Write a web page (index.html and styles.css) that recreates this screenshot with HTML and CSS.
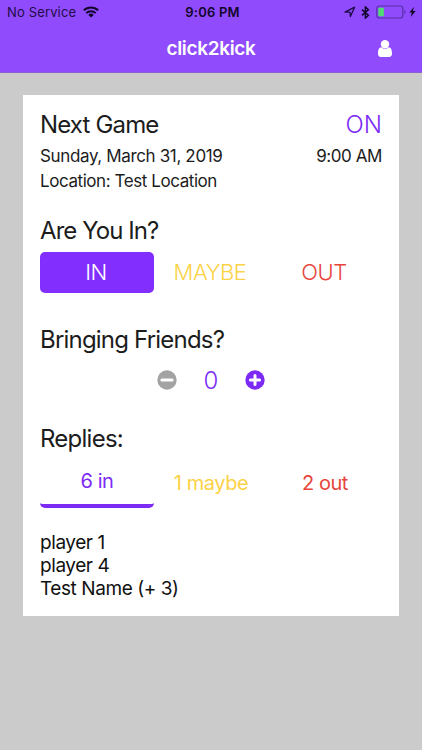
FILE: index.html
```
<!DOCTYPE html>
<html lang="en">
<head>
<meta charset="utf-8">
<title>click2kick</title>
<link rel="stylesheet" href="styles.css">
</head>
<body>
<header class="header">
  <div class="status">
    <div class="status-left">
      <span class="carrier">No Service</span>
      <svg class="wifi" width="16" height="12" viewBox="0 0 16 12"><g fill="none" stroke="#12062b" stroke-width="2"><path d="M.8 4.4a10.2 10.2 0 0 1 14.4 0"/><path d="M3.3 7.1a6.6 6.6 0 0 1 9.4 0"/></g><path d="M8 11.6 5.3 8.9a3.8 3.8 0 0 1 5.4 0z" fill="#12062b"/></svg>
    </div>
    <span class="clock">9:06 PM</span>
    <div class="status-right">
      <svg width="12" height="12" viewBox="0 0 12 12"><path d="M1 6.2 10.6 1.2 6.4 10.6 6 6.2z" fill="none" stroke="#1f0c48" stroke-width="1.3" stroke-linejoin="round"/></svg>
      <svg class="bluetooth" width="9" height="13" viewBox="0 0 9 13"><path d="M1 3.6 7.4 9.2 4.4 12V1l3 2.8L1 9.4" fill="none" stroke="#12062b" stroke-width="1.5"/></svg>
      <svg class="battery" width="30" height="14" viewBox="0 0 30 14"><rect x=".8" y="1" width="26" height="12" rx="2.5" fill="none" stroke="#5a2fa8" stroke-width="1.2"/><rect x="2.3" y="2.7" width="5.6" height="8.6" rx=".8" fill="#50db70"/><path d="M28.3 5v4q1.3-.5 1.3-2t-1.3-2" fill="#5a2fa8"/></svg>
      <svg class="bolt" width="7" height="10" viewBox="0 0 7 10"><path d="M4.8 0 .4 5.6h2.4L1.8 10l4.8-6H4z" fill="#12062b"/></svg>
    </div>
  </div>
  <div class="navbar">
    <h1>click2kick</h1>
    <svg class="user" width="14" height="17" viewBox="0 0 14 17"><path d="M3.3 7.2C1 7.2 0 10 0 13.6 0 15.6 1 17 2.8 17h8.4c1.8 0 2.8-1.4 2.8-3.4 0-3.6-1-6.4-3.3-6.4A5.2 5.2 0 0 1 7 9a5.2 5.2 0 0 1-3.7-1.8z" fill="#fff"/><circle cx="7" cy="4.2" r="4.2" fill="#fff"/></svg>
  </div>
</header>
<main class="card">
  <div class="row title"><h2>Next Game</h2><span class="on">ON</span></div>
  <div class="row detail first"><span class="date">Sunday, March 31, 2019</span><span class="time">9:00 AM</span></div>
  <div class="row detail"><span>Location: Test Location</span></div>
  <h2 class="attend">Are You In?</h2>
  <div class="choices">
    <div class="choice selected">IN</div>
    <div class="choice maybe">MAYBE</div>
    <div class="choice out">OUT</div>
  </div>
  <h2 class="friends">Bringing Friends?</h2>
  <div class="counter">
    <svg width="20" height="20" viewBox="0 0 20 20"><circle cx="10" cy="10" r="9.7" fill="#a3a3a3"/><path d="M5 10h10" stroke="#fff" stroke-width="3.2" stroke-linecap="round"/></svg>
    <span class="count">0</span>
    <svg width="20" height="20" viewBox="0 0 20 20"><circle cx="10" cy="10" r="9.7" fill="#7c2bf5"/><path d="M5.4 10h9.2M10 5.4v9.2" stroke="#fff" stroke-width="3" stroke-linecap="round"/></svg>
  </div>
  <h2 class="replies">Replies:</h2>
  <div class="tabs">
    <div class="tab active">6 in</div>
    <div class="tab maybe">1 maybe</div>
    <div class="tab out">2 out</div>
  </div>
  <ul class="players">
    <li>player 1</li>
    <li>player 4</li>
    <li>Test Name (+ 3)</li>
  </ul>
</main>
</body>
</html>
```
FILE: styles.css
```
* { box-sizing: border-box; margin: 0; padding: 0; }
body { height: 750px; overflow: hidden; background: #cbcbcb; font-family: Inter, "Liberation Sans", sans-serif; color: #1c1c1c; }
svg { display: block; flex: none; }
.header { height: 73px; background: #904bfd; border-bottom: 1px solid #8a5fcf; }
.status { display: grid; grid-template-columns: 1fr auto 1fr; align-items: center; height: 24px; padding: 0 6px 0 7px; font-size: 13px; color: #1f0c48; }
.status-left, .status-right { display: flex; align-items: center; }
.status-right { justify-content: flex-end; }
.carrier { letter-spacing: .15px; }
.wifi { margin-left: 7px; }
.clock { padding-left: 2px; font-weight: 600; letter-spacing: .2px; color: #12062b; }
.bluetooth { margin-left: 5px; }
.battery { margin-left: 6px; }
.bolt { margin-left: 3px; }
.navbar { display: grid; grid-template-columns: 1fr auto 1fr; align-items: center; height: 48px; padding: 0 30px; }
.navbar h1 { grid-column: 2; font-size: 19px; font-weight: 600; letter-spacing: -.35px; color: #fff; }
.user { justify-self: end; }
.card { width: 376px; height: 521px; margin: 22px 0 0 23px; padding: 14px 17px 0; background: #fff; }
.row { display: flex; justify-content: space-between; }
h2, .title { font-size: 24px; font-weight: 400; line-height: 32px; letter-spacing: -.85px; }
.on { color: #7c2bf5; font-weight: 300; letter-spacing: 0; }
.detail { font-size: 17px; line-height: 25px; letter-spacing: -.43px; }
.date { letter-spacing: -.36px; }
.first { margin-top: 3px; }
.attend { margin-top: 21px; letter-spacing: -.93px; }
.choices { display: grid; grid-template-columns: repeat(3, 1fr); margin-top: 5px; }
.choice { height: 41px; padding-right: 2px; font-size: 22px; font-weight: 350; line-height: 41px; letter-spacing: -.4px; text-align: center; border-radius: 5px; }
.selected { background: #812eff; color: #fff; }
.maybe { color: #fcd245; }
.out { color: #e8453c; }
.friends { margin-top: 31px; letter-spacing: -.8px; }
.counter { display: flex; align-items: center; justify-content: center; height: 32px; margin-top: 8px; }
.count { width: 68px; text-align: center; font-size: 24px; font-weight: 300; color: #7c2bf5; }
.replies { margin-top: 27px; letter-spacing: -.75px; }
.tabs { display: grid; grid-template-columns: repeat(3, 1fr); height: 49px; margin-top: 3px; }
.tab { font-size: 20px; line-height: 50px; letter-spacing: -.45px; text-align: center; }
.active { line-height: 46px; color: #7c2bf5; border-bottom: 4px solid #7c2bf5; border-radius: 5px; }
.players { margin-top: 24px; list-style: none; font-size: 19px; line-height: 23px; letter-spacing: -.43px; color: #111; }
```
